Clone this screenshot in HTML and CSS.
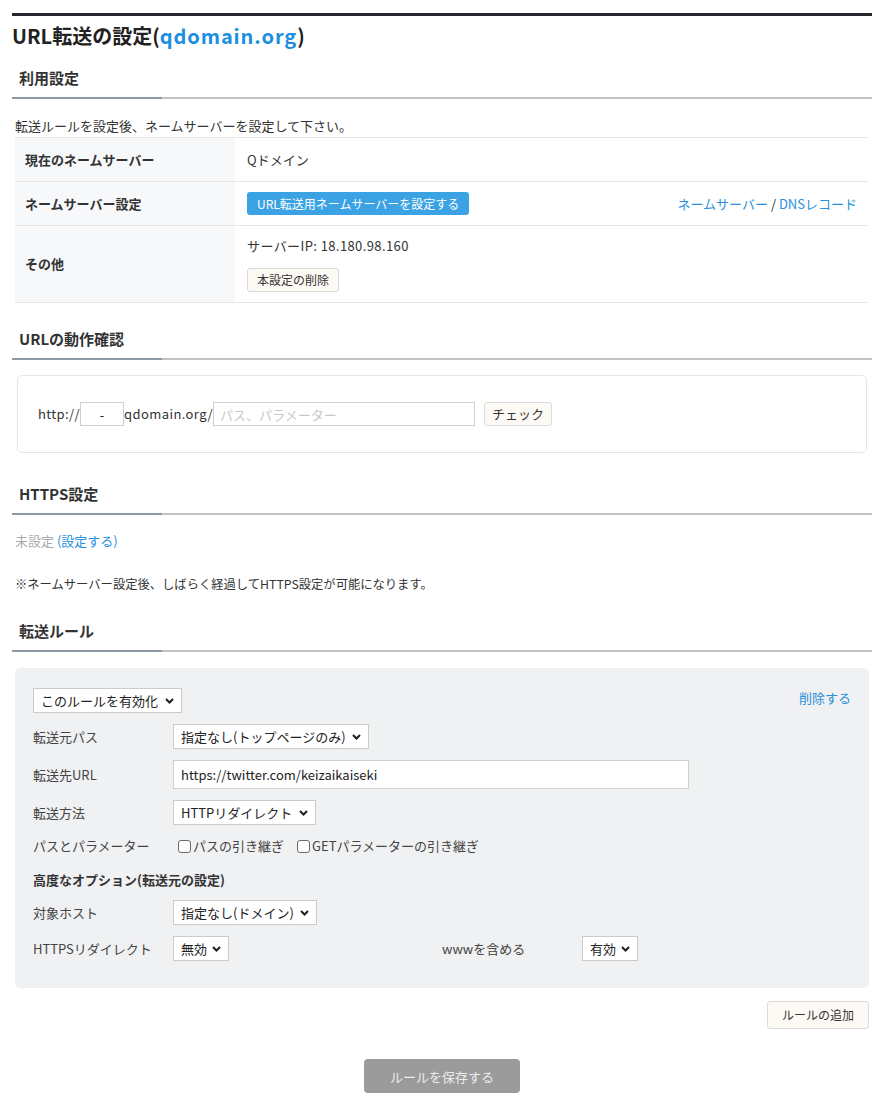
FILE: index.html
```html
<!DOCTYPE html>
<html lang="ja">
<head>
<meta charset="utf-8">
<title>URL転送の設定</title>
<link rel="stylesheet" href="styles.css">
</head>
<body>
<div class="page">
  <h1 class="title">URL転送の設定(<a href="#">qdomain.org</a>)</h1>

  <section class="sec sec-usage">
    <h2 class="sec-head">利用設定</h2>
    <p class="note">転送ルールを設定後、ネームサーバーを設定して下さい。</p>
    <div class="info">
      <div class="info-row row-1">
        <div class="info-label">現在のネームサーバー</div>
        <div class="info-value">Qドメイン</div>
      </div>
      <div class="info-row row-2">
        <div class="info-label">ネームサーバー設定</div>
        <div class="info-value split">
          <button class="btn-primary" type="button">URL転送用ネームサーバーを設定する</button>
          <span class="links"><a href="#">ネームサーバー</a> / <a href="#">DNSレコード</a></span>
        </div>
      </div>
      <div class="info-row row-3">
        <div class="info-label">その他</div>
        <div class="info-value stack">
          <span class="ip">サーバーIP: 18.180.98.160</span>
          <button class="btn-light btn-del" type="button">本設定の削除</button>
        </div>
      </div>
    </div>
  </section>

  <section class="sec sec-check">
    <h2 class="sec-head">URLの動作確認</h2>
    <div class="check-box">
      <span class="latin">http://</span><input class="in-sub" type="text" value="-"><span class="latin">qdomain.org/</span><input class="in-path" type="text" placeholder="パス、パラメーター"><button class="btn-light btn-check" type="button">チェック</button>
    </div>
  </section>

  <section class="sec sec-https">
    <h2 class="sec-head">HTTPS設定</h2>
    <p class="status">未設定 <a href="#">(設定する)</a></p>
    <p class="note note-https">※ネームサーバー設定後、しばらく経過してHTTPS設定が可能になります。</p>
  </section>

  <section class="sec sec-rules">
    <h2 class="sec-head">転送ルール</h2>
    <div class="rule">
      <div class="rule-top">
        <span class="sel"><select><option>このルールを有効化</option><option>このルールを無効化</option></select><svg class="chev" width="9" height="6" viewBox="0 0 9 6"><path d="M1 1l3.5 3.5L8 1" fill="none" stroke="#1e1e1e" stroke-width="2"/></svg></span>
        <a class="del" href="#">削除する</a>
      </div>
      <div class="field">
        <span class="flabel">転送元パス</span>
        <span class="sel"><select><option>指定なし(トップページのみ)</option></select><svg class="chev" width="9" height="6" viewBox="0 0 9 6"><path d="M1 1l3.5 3.5L8 1" fill="none" stroke="#1e1e1e" stroke-width="2"/></svg></span>
      </div>
      <div class="field">
        <span class="flabel">転送先URL</span>
        <input class="in-url" type="text" value="https://twitter.com/keizaikaiseki">
      </div>
      <div class="field">
        <span class="flabel">転送方法</span>
        <span class="sel"><select><option>HTTPリダイレクト</option></select><svg class="chev" width="9" height="6" viewBox="0 0 9 6"><path d="M1 1l3.5 3.5L8 1" fill="none" stroke="#1e1e1e" stroke-width="2"/></svg></span>
      </div>
      <div class="field field-check">
        <span class="flabel">パスとパラメーター</span>
        <label class="cb"><input type="checkbox"><span>パスの引き継ぎ</span></label>
        <label class="cb"><input type="checkbox"><span>GETパラメーターの引き継ぎ</span></label>
      </div>
      <div class="adv">高度なオプション(転送元の設定)</div>
      <div class="field">
        <span class="flabel">対象ホスト</span>
        <span class="sel"><select><option>指定なし(ドメイン)</option></select><svg class="chev" width="9" height="6" viewBox="0 0 9 6"><path d="M1 1l3.5 3.5L8 1" fill="none" stroke="#1e1e1e" stroke-width="2"/></svg></span>
      </div>
      <div class="field field-two">
        <div class="half">
          <span class="flabel">HTTPSリダイレクト</span>
          <span class="sel sel-small"><select><option>無効</option></select><svg class="chev" width="9" height="6" viewBox="0 0 9 6"><path d="M1 1l3.5 3.5L8 1" fill="none" stroke="#1e1e1e" stroke-width="2"/></svg></span>
        </div>
        <div class="half">
          <span class="flabel">wwwを含める</span>
          <span class="sel sel-small"><select><option>有効</option></select><svg class="chev" width="9" height="6" viewBox="0 0 9 6"><path d="M1 1l3.5 3.5L8 1" fill="none" stroke="#1e1e1e" stroke-width="2"/></svg></span>
        </div>
      </div>
    </div>
    <div class="add-row">
      <button class="btn-light btn-add" type="button">ルールの追加</button>
    </div>
    <div class="save-row">
      <button class="btn-save" type="button">ルールを保存する</button>
    </div>
  </section>
</div>
</body>
</html>
```

FILE: styles.css
```css
* { box-sizing: border-box; }

body {
  margin: 0;
  background: #fff;
  color: #333;
  font-family: "Noto Sans CJK JP", "Noto Sans", sans-serif;
  font-size: 13px;
  line-height: 20px;
}

a { color: #2a8fdc; text-decoration: none; }

button, input, select {
  font-family: inherit;
  font-size: 13px;
  color: #222;
  margin: 0;
}

.page {
  margin: 13px 10px 0 12px;
  border-top: 3px solid #26262c;
  padding-bottom: 11px;
}

.title {
  margin: 6px 0 0;
  font-size: 20px;
  line-height: 28px;
  font-weight: bold;
  color: #222;
}
.title a { color: #1c8fe0; letter-spacing: 0.9px; }

.sec-head {
  margin: 0;
  padding: 0 0 10px 7px;
  font-size: 15px;
  line-height: 22px;
  font-weight: bold;
  color: #333;
  background: linear-gradient(to right, #8c99a4 150px, #c2c2c2 150px) left bottom / 100% 2px no-repeat;
}

.sec-usage { margin-top: 17px; }
.sec-check { margin-top: 25px; }
.sec-https { margin-top: 30px; }
.sec-rules { margin-top: 26px; }

.note {
  margin: 17px 0 0 3px;
  font-size: 13px;
  line-height: 20px;
  color: #333;
}

/* info table */
.info {
  margin: 1px 4px 0 3px;
  border-bottom: 1px solid #e6e6e6;
}
.info-row {
  display: grid;
  grid-template-columns: 220px 1fr;
  border-top: 1px solid #e6e6e6;
}
.row-1 { min-height: 44px; }
.row-2 { min-height: 44px; }
.row-3 { min-height: 77px; }

.info-label {
  display: flex;
  align-items: center;
  padding-left: 10px;
  background: #f7f8fa;
  font-weight: bold;
  color: #333;
}
.info-value {
  display: flex;
  align-items: center;
  padding: 0 11px 0 12px;
  color: #333;
}
.info-value.split { justify-content: space-between; }
.info-value.stack {
  flex-direction: column;
  align-items: flex-start;
  justify-content: flex-start;
  gap: 12px;
  padding-top: 10px;
  padding-bottom: 10px;
}
.ip { letter-spacing: 0.4px; }
.links { color: #333; }

.btn-primary {
  height: 23px;
  padding: 0 10px;
  border: none;
  border-radius: 3px;
  background: #3ba2e4;
  color: #fff;
  font-size: 12px;
  line-height: 23px;
}

.btn-light {
  border: 1px solid #dcdcdc;
  border-radius: 3px;
  background: #fdf9f5;
  color: #333;
}
.btn-del {
  height: 24px;
  padding: 0 9px;
  font-size: 12px;
  line-height: 22px;
}

/* URL check */
.check-box {
  margin: 15px 5px 0 5px;
  padding: 26px 20px;
  border: 1px solid #e6e6e6;
  border-radius: 5px;
  display: flex;
  align-items: center;
  color: #333;
}
.latin { letter-spacing: 0.4px; }
.check-box input {
  height: 24px;
  border: 1px solid #cfcfcf;
  border-radius: 0;
  background: #fff;
  outline: none;
}
.in-sub {
  width: 44px;
  text-align: center;
  padding: 0;
}
.in-path {
  width: 262px;
  padding: 0 6px;
}
.in-path::placeholder { color: #c8c8c8; }
.btn-check {
  height: 24px;
  margin-left: 9px;
  padding: 0 7px;
  font-size: 13px;
  line-height: 22px;
}

/* HTTPS */
.status {
  margin: 16px 0 0 3px;
  color: #aaa;
}
.note-https { margin-top: 23px; font-size: 12.3px; }

/* rules */
.rule {
  margin: 16px 3px 0 3px;
  padding: 20px 18px 27px;
  background: #f0f1f3;
  border-radius: 5px;
  display: flex;
  flex-direction: column;
  gap: 11px;
}
.rule-top {
  display: flex;
  justify-content: space-between;
  align-items: flex-start;
}
.del { line-height: 20px; }

.sel {
  position: relative;
  display: inline-block;
}
.sel select {
  appearance: none;
  -webkit-appearance: none;
  height: 25px;
  padding: 0 22px 0 7px;
  border: 1px solid #cbcbcb;
  border-radius: 0;
  background: #fff;
  color: #222;
  outline: none;
}
.sel-small select { padding-right: 20px; }
.chev {
  position: absolute;
  right: 8px;
  top: 10px;
  pointer-events: none;
}

.field {
  display: flex;
  align-items: center;
}
.flabel {
  width: 140px;
  flex-shrink: 0;
  color: #444;
}
.in-url {
  width: 516px;
  height: 29px;
  padding: 0 7px;
  border: 1px solid #cfcfcf;
  border-radius: 0;
  background: #fff;
  outline: none;
}

.field-check { gap: 8px; height: 20px; }
.field-check .flabel { margin-right: -8px; }
.cb {
  display: inline-flex;
  align-items: center;
  color: #444;
}
.cb input {
  appearance: none;
  -webkit-appearance: none;
  width: 13px;
  height: 13px;
  margin: 0 2px 0 5px;
  border: 1px solid #6b6b6b;
  border-radius: 3px;
  background: #fff;
}

.adv {
  margin-top: 3px;
  margin-bottom: -1px;
  font-weight: bold;
  color: #333;
  line-height: 20px;
}

.field-two { display: grid; grid-template-columns: 409px 1fr; }
.half { display: flex; align-items: center; }

.add-row {
  display: flex;
  justify-content: flex-end;
  margin: 13px 3px 0 0;
}
.btn-add {
  height: 28px;
  padding: 0 14px;
  font-size: 12px;
  line-height: 26px;
}

.save-row {
  display: flex;
  justify-content: center;
  margin-top: 30px;
}
.btn-save {
  width: 156px;
  height: 34px;
  border: none;
  border-radius: 4px;
  background: #9b9b9b;
  color: #ececec;
  font-size: 13px;
}
```
